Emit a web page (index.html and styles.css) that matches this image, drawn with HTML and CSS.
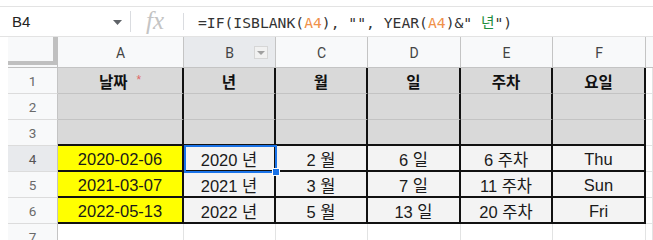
FILE: index.html
```html
<!DOCTYPE html>
<html lang="ko">
<head>
<meta charset="utf-8">
<title>Sheet</title>
<link rel="stylesheet" href="styles.css">
</head>
<body>
<div class="bar">
  <div class="namebox"><span>B4</span><svg class="caret" width="9" height="5" viewBox="0 0 9 5"><path d="M0 0H9L4.5 5Z" fill="#5f6368"/></svg></div>
  <div class="sep"></div>
  <div class="fx">fx</div>
  <div class="sep short"></div>
  <div class="formula">=IF(ISBLANK(<span class="ref">A4</span>), "", YEAR(<span class="ref">A4</span>)&amp;" <span class="str">년</span>")</div>
</div>
<div class="sheet">
  <div class="corner"><div class="corner-in"></div></div>
  <div class="ch">A</div>
  <div class="ch sel">B<span class="filter"><svg width="8" height="4" viewBox="0 0 8 4"><path d="M0 0H8L4 4Z" fill="#a0a0a0"/></svg></span></div>
  <div class="ch">C</div>
  <div class="ch">D</div>
  <div class="ch">E</div>
  <div class="ch">F</div>
  <div class="ch extra"></div>

  <div class="rh">1</div>
  <div class="c hd b">날짜<span class="req">*</span></div>
  <div class="c hd b">년</div>
  <div class="c hd b">월</div>
  <div class="c hd b">일</div>
  <div class="c hd b">주차</div>
  <div class="c hd b">요일</div>
  <div class="c"></div>

  <div class="rh">2</div>
  <div class="c hd"></div>
  <div class="c hd"></div>
  <div class="c hd"></div>
  <div class="c hd"></div>
  <div class="c hd"></div>
  <div class="c hd"></div>
  <div class="c"></div>

  <div class="rh">3</div>
  <div class="c hd last"></div>
  <div class="c hd last"></div>
  <div class="c hd last"></div>
  <div class="c hd last"></div>
  <div class="c hd last"></div>
  <div class="c hd last"></div>
  <div class="c"></div>

  <div class="rh sel">4</div>
  <div class="c dt yel">2020-02-06</div>
  <div class="c dt gr active">2020 년<div class="selbox"><div class="handle"></div></div></div>
  <div class="c dt gr">2 월</div>
  <div class="c dt gr">6 일</div>
  <div class="c dt gr">6 주차</div>
  <div class="c dt gr">Thu</div>
  <div class="c"></div>

  <div class="rh">5</div>
  <div class="c dt yel">2021-03-07</div>
  <div class="c dt gr">2021 년</div>
  <div class="c dt gr">3 월</div>
  <div class="c dt gr">7 일</div>
  <div class="c dt gr">11 주차</div>
  <div class="c dt gr">Sun</div>
  <div class="c"></div>

  <div class="rh">6</div>
  <div class="c dt yel">2022-05-13</div>
  <div class="c dt gr">2022 년</div>
  <div class="c dt gr">5 월</div>
  <div class="c dt gr">13 일</div>
  <div class="c dt gr">20 주차</div>
  <div class="c dt gr">Fri</div>
  <div class="c"></div>

  <div class="rh">7</div>
  <div class="c"></div>
  <div class="c"></div>
  <div class="c"></div>
  <div class="c"></div>
  <div class="c"></div>
  <div class="c"></div>
  <div class="c"></div>
</div>
</body>
</html>
```

FILE: styles.css
```css
* { box-sizing: border-box; }
html, body {
  margin: 0;
  background: #fff;
  width: 653px;
  height: 240px;
  overflow: hidden;
  font-family: "Liberation Sans", "Noto Sans CJK KR", sans-serif;
}
.bar {
  margin-top: 6px;
  height: 31px;
  border-top: 1px solid #e3e3e3;
  border-bottom: 1px solid #e3e3e3;
  display: flex;
  align-items: center;
}
.namebox {
  width: 130px;
  display: flex;
  align-items: center;
  justify-content: space-between;
  padding: 0 8px 0 12px;
  font-size: 15px;
  color: #222;
}
.caret { margin-top: 1px; }
.sep {
  width: 1px;
  height: 21px;
  background: #dadce0;
}
.sep.short { height: 17px; }
.fx {
  width: 52px;
  padding-left: 15px;
  font-family: "Liberation Serif", serif;
  font-style: italic;
  font-size: 25px;
  color: #c4c4c4;
  line-height: 1;
  margin-top: -3px;
}
.formula {
  padding-left: 14px;
  font-family: "DejaVu Sans Mono", "Noto Sans CJK KR", monospace;
  font-size: 14.7px;
  color: #333;
  white-space: pre;
}
.ref { color: #f0914a; }
.str { color: #1e8e3e; }

.sheet {
  display: grid;
  grid-template-columns: 50px 126px 92px 92px 93px 92px 93px 1fr;
  grid-template-rows: 31px repeat(7, 26px);
  padding-left: 8px;
}
.sheet > div {
  display: flex;
  align-items: center;
  justify-content: center;
}
.corner {
  background: #f8f9fa;
  border-right: 1px solid #c0c0c0;
  border-bottom: 1px solid #c0c0c0;
  align-items: stretch !important;
  justify-content: stretch !important;
}
.corner-in {
  flex: 1;
  border-right: 4px solid #c0c0c0;
  border-bottom: 4px solid #c0c0c0;
  margin-bottom: 2px;
}
.ch {
  background: #f8f9fa;
  border-right: 1px solid #c4c4c4;
  border-bottom: 1px solid #c4c4c4;
  font-family: "Roboto", "Liberation Sans", sans-serif;
  font-size: 14px;
  color: #444;
  padding-top: 1px;
}
.ch.sel {
  background: #e8eaed;
  position: relative;
}
.ch.extra { border-right: none; }
.filter {
  position: absolute;
  right: 7px;
  top: 9px;
  width: 14px;
  height: 13px;
  border: 1px solid #d6d6d6;
  background: #f1f1f1;
  display: flex;
  align-items: center;
  justify-content: center;
}
.rh {
  background: #f8f9fa;
  border-right: 1px solid #c4c4c4;
  border-bottom: 1px solid #dcdcdc;
  font-family: "Roboto", "Liberation Sans", sans-serif;
  font-size: 13.5px;
  color: #6a6a6a;
}
.rh.sel { background: #e8eaed; color: #555; }
.c {
  border-right: 1px solid #e2e3e3;
  border-bottom: 1px solid #e2e3e3;
  font-size: 16.5px;
  color: #1a1a1a;
}
.hd {
  background: #d9d9d9;
  border-right: 2px solid #111;
  border-bottom: 1px solid #c3c3c3;
}
.hd.last { border-bottom: 2px solid #111; }
.b {
  font-family: "Noto Sans CJK KR", sans-serif;
  font-weight: bold;
  font-size: 15.5px;
  color: #111;
}
.req {
  color: #e06666;
  font-family: "Liberation Sans", sans-serif;
  font-size: 12px;
  font-weight: normal;
  align-self: flex-start;
  margin: 5px 0 0 9px;
}
.dt {
  border-right: 2px solid #111;
  border-bottom: 2px solid #111;
  padding-top: 2px;
}
.yel { background: #ffff00; }
.gr { background: #f3f3f3; }
.active { position: relative; }
.selbox {
  position: absolute;
  left: 0;
  top: -1px;
  right: -3px;
  bottom: -3px;
  border: 2px solid #1a73e8;
}
.handle {
  position: absolute;
  right: -5px;
  bottom: -5px;
  width: 8px;
  height: 8px;
  background: #1a73e8;
  border: 1px solid #fff;
}
```
